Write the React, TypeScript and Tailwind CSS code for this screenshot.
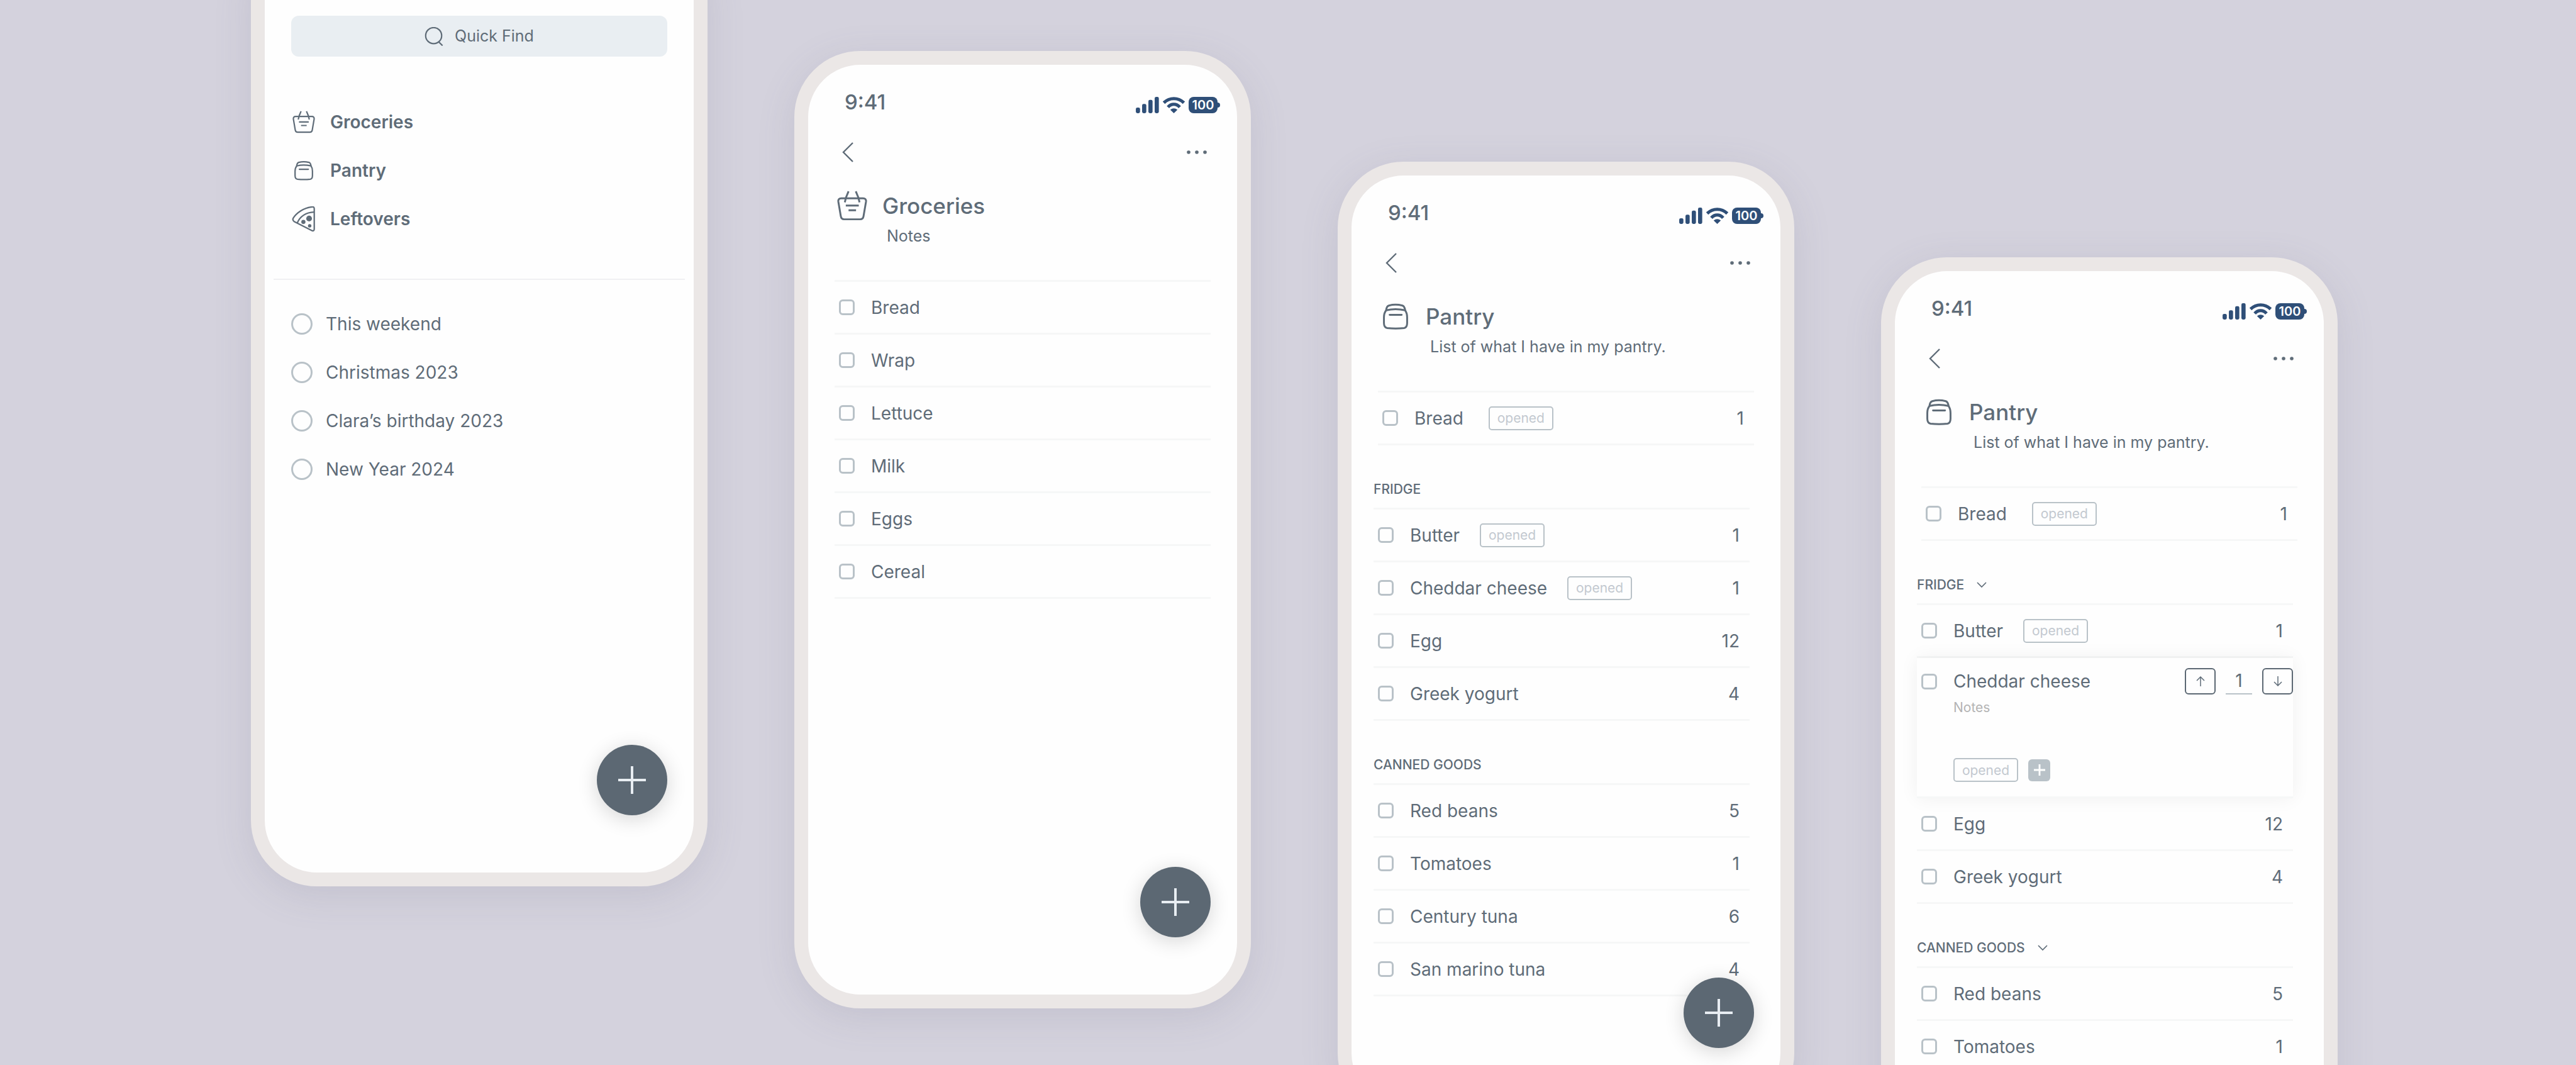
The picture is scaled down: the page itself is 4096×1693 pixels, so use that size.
import type { ReactNode } from "react";

type IconProps = { className?: string };

function BasketIcon({ className }: IconProps) {
  return (
    <svg viewBox="43 42 121 121" className={className} fill="none" stroke="currentColor" strokeWidth="7.5" strokeLinejoin="round" aria-hidden="true">
      <path d="M60 73H147Q160 73 159 86L149 145Q147 157 136 157H71Q60 157 58 145L48 86Q47 73 60 73Z" />
      <path d="M89 45L79 69L74 89M118 45L128 69L133 89" />
      <path d="M78 102H130M89 121H119" />
    </svg>
  );
}

function JarIcon({ className }: IconProps) {
  return (
    <svg viewBox="43 298 121 121" className={className} fill="none" stroke="currentColor" strokeWidth="7.5" strokeLinejoin="round" strokeLinecap="round" aria-hidden="true">
      <path d="M66 334Q67 318 77 315Q103 308 131 315Q140 318 142 334" />
      <path d="M66 334Q103 325 142 334Q150 345 150 362V385Q150 403 138 405Q104 409 70 405Q57 403 57 385V362Q57 345 66 334Z" />
      <path d="M80 352H128" />
    </svg>
  );
}

function PizzaIcon({ className }: IconProps) {
  return (
    <svg viewBox="37 548 132 132" className={className} fill="none" stroke="currentColor" strokeWidth="7.5" strokeLinejoin="round" aria-hidden="true">
      <path d="M148 551Q158 550 158 561V668Q157 679 147 676L53 628Q43 621 47 611C64 583 103 555 148 551Z" />
      <path d="M69 635C82 602 114 579 157 578" />
      <g fill="currentColor" stroke="none">
        <circle cx="131" cy="612" r="15" />
        <circle cx="101" cy="630" r="11" />
        <circle cx="134" cy="650" r="9" />
      </g>
    </svg>
  );
}

function SearchIcon({ className }: IconProps) {
  return (
    <svg viewBox="0 0 33 33" className={className} fill="none" stroke="currentColor" strokeWidth="2.4" aria-hidden="true">
      <circle cx="16" cy="15" r="14" />
      <path d="M24.5 25.5L31.5 32.5" />
    </svg>
  );
}

function ChevronLeft({ className }: IconProps) {
  return (
    <svg viewBox="0 0 18 32" className={className} fill="none" stroke="currentColor" strokeWidth="2.4" aria-hidden="true">
      <path d="M17 1L2 16L17 31" />
    </svg>
  );
}

function ChevronDown({ className }: IconProps) {
  return (
    <svg viewBox="0 0 16 10" className={className} fill="none" stroke="currentColor" strokeWidth="1.7" aria-hidden="true">
      <path d="M1 1L8 8L15 1" />
    </svg>
  );
}

function DotsIcon({ className }: IconProps) {
  return (
    <svg viewBox="0 0 32 6" className={className} fill="currentColor" aria-hidden="true">
      <circle cx="3" cy="3" r="2.8" />
      <circle cx="16" cy="3" r="2.8" />
      <circle cx="29" cy="3" r="2.8" />
    </svg>
  );
}

function PlusIcon({ className, weight }: IconProps & { weight: number }) {
  return (
    <svg viewBox="0 0 44 44" className={className} fill="none" stroke="currentColor" strokeWidth={weight} aria-hidden="true">
      <path d="M22 0V44M0 22H44" />
    </svg>
  );
}

function ArrowIcon({ down = false }: { down?: boolean }) {
  return (
    <svg viewBox="0 0 14 16" className="h-4 w-3.5" fill="none" stroke="currentColor" strokeWidth="1.5" aria-hidden="true">
      <path d={down ? "M7 0V14.5M1 9L7 15L13 9" : "M7 16V1.5M1 7L7 1L13 7"} />
    </svg>
  );
}

function SignalIcon({ className }: IconProps) {
  return (
    <svg viewBox="0 0 122 86" className={className} fill="currentColor" aria-hidden="true">
      <rect x="0" y="56" width="22" height="30" rx="8" />
      <rect x="33" y="37" width="22" height="49" rx="8" />
      <rect x="66" y="16" width="22" height="70" rx="8" />
      <rect x="99" y="0" width="22" height="86" rx="8" />
    </svg>
  );
}

function WifiIcon({ className }: IconProps) {
  return (
    <svg viewBox="0 0 116 86" className={className} fill="none" stroke="currentColor" strokeWidth="17" aria-hidden="true">
      <path d="M5 31Q28 9 58 9T111 31" />
      <path d="M27 54Q40 39 58 39T89 54" />
      <path d="M39 68Q58 53 77 68L58 86Z" fill="currentColor" stroke="none" />
    </svg>
  );
}

function Phone({ offset, children }: { offset: string; children: ReactNode }) {
  return (
    <section
      className={`relative min-h-[1522px] rounded-[105px] border-[22px] border-[#ebe7e6] bg-[#fefefe] shadow-[0_14px_60px_rgba(100,98,130,0.15)] ${offset}`}
    >
      {children}
    </section>
  );
}

function AddButton() {
  return (
    <button
      aria-label="Add"
      className="absolute right-[42px] bottom-[91px] flex size-28 items-center justify-center rounded-full bg-[#5c6873] text-[#e8edf2] shadow-[0_6px_32px_rgba(0,0,0,0.16)]"
    >
      <PlusIcon className="size-11" weight={4} />
    </button>
  );
}

function PhoneHeader({ title, note, icon }: { title: string; note: string; icon: ReactNode }) {
  return (
    <header>
      <div className="flex h-[79px] items-end justify-between pr-[27px] pl-[58px]">
        <span className="text-[33px] leading-10 font-medium">9:41</span>
        <div className="flex items-center gap-1.5 pb-0.5 text-[#2f4f78]">
          <SignalIcon className="h-[26px] w-[37px]" />
          <WifiIcon className="h-[26px] w-[35px]" />
          <div className="flex items-center">
            <span className="flex h-[26px] w-[46px] items-center justify-center rounded-lg bg-[#2f4f78] text-[20px] leading-none font-semibold text-white">
              100
            </span>
            <span className="h-2 w-1 rounded-r-full bg-[#2f4f78]" />
          </div>
        </div>
      </div>
      <div className="mt-10 flex h-10 items-center justify-between pr-12 pl-[54px]">
        <button aria-label="Back">
          <ChevronLeft className="h-8 w-[18px]" />
        </button>
        <button aria-label="More">
          <DotsIcon className="h-1.5 w-8" />
        </button>
      </div>
      <div className="mt-[41px] flex h-12 items-center gap-6 pl-[46px]">
        {icon}
        <h1 className="text-[35px] leading-none font-medium">{title}</h1>
      </div>
      <p className="mt-2 pl-[125px] text-[25px] leading-8">{note}</p>
    </header>
  );
}

function CheckBox() {
  return <input type="checkbox" className="size-[25px] shrink-0 appearance-none rounded-[6px] border-3 border-[#b9c2c8]" />;
}

function Tag() {
  return (
    <span className="flex h-[38px] w-[103px] items-center justify-center rounded-[5px] border-2 border-[#b9c2c8] text-[21px] leading-none text-[#c3c9d0]">
      opened
    </span>
  );
}

type Item = { name: string; count?: number; opened?: boolean };

function ItemRow({ item, wide = false }: { item: Item; wide?: boolean }) {
  return (
    <li className="flex h-[84px] items-center border-b-3 border-[#f6f7f7] pr-4 pl-[7px] text-[28px] leading-9">
      <label className="flex items-center gap-[26px]">
        <CheckBox />
        {item.name}
      </label>
      {item.opened && (
        <span className={wide ? "ml-10" : "ml-8"}>
          <Tag />
        </span>
      )}
      {item.count !== undefined && <span className="ml-auto">{item.count}</span>}
    </li>
  );
}

function SectionTitle({ title, collapsible = false }: { title: string; collapsible?: boolean }) {
  return (
    <h2 className="pt-14 pb-[15px] text-[21px] leading-7 font-medium">
      {collapsible ? (
        <button className="flex items-center gap-5">
          {title}
          <ChevronDown className="h-2.5 w-4" />
        </button>
      ) : (
        title
      )}
    </h2>
  );
}

function TopItem() {
  return (
    <ul className="mx-[42px] mt-[54px] border-t-3 border-[#f6f7f7]">
      <ItemRow item={{ name: "Bread", count: 1, opened: true }} wide />
    </ul>
  );
}

function ExpandedItem() {
  return (
    <li className="relative h-[223px] border-b-3 border-[#f6f7f7] bg-[#fefefe] pt-4 shadow-[0_0_28px_rgba(0,0,0,0.06)]">
      <div className="flex h-[42px] items-center justify-between pl-[7px]">
        <label className="flex items-center gap-[26px] text-[28px] leading-9">
          <CheckBox />
          Cheddar cheese
        </label>
        <div className="flex items-center gap-4">
          <button aria-label="Increase" className="flex h-[42px] w-[49px] items-center justify-center rounded-[6px] border-2 border-[#5c6873]">
            <ArrowIcon />
          </button>
          <input aria-label="Quantity" defaultValue="1" className="h-[42px] w-[42px] border-b-2 border-[#b9c2c8] text-center text-[28px]" />
          <button aria-label="Decrease" className="flex h-[42px] w-[49px] items-center justify-center rounded-[6px] border-2 border-[#5c6873]">
            <ArrowIcon down />
          </button>
        </div>
      </div>
      <div className="pl-[58px]">
        <input
          aria-label="Notes"
          placeholder="Notes"
          className="mt-[7px] block h-7 w-full bg-transparent text-[21px] leading-7 placeholder:text-[#b4b4b4] placeholder:opacity-100"
        />
        <div className="mt-[66px] flex items-center gap-4">
          <Tag />
          <button aria-label="Add tag" className="flex size-[35px] items-center justify-center rounded-[6px] bg-[#b9c2c8] text-white">
            <PlusIcon className="size-[18px]" weight={7} />
          </button>
        </div>
      </div>
    </li>
  );
}

const places = [
  { name: "Groceries", icon: <BasketIcon className="size-9" /> },
  { name: "Pantry", icon: <JarIcon className="size-9" /> },
  { name: "Leftovers", icon: <PizzaIcon className="size-10" /> },
];

const lists = ["This weekend", "Christmas 2023", "Clara’s birthday 2023", "New Year 2024"];

const groceries = ["Bread", "Wrap", "Lettuce", "Milk", "Eggs", "Cereal"];

const fridge: Item[] = [
  { name: "Butter", count: 1, opened: true },
  { name: "Cheddar cheese", count: 1, opened: true },
  { name: "Egg", count: 12 },
  { name: "Greek yogurt", count: 4 },
];

const canned: Item[] = [
  { name: "Red beans", count: 5 },
  { name: "Tomatoes", count: 1 },
  { name: "Century tuna", count: 6 },
  { name: "San marino tuna", count: 4 },
];

function HomePhone() {
  return (
    <Phone offset="-mt-[113px]">
      <div className="px-[42px] pt-[116px]">
        <button className="flex h-[65px] w-full items-center justify-center gap-[18px] rounded-xl bg-[#e9eef2] text-[25px]">
          <SearchIcon className="size-[30px]" />
          Quick Find
        </button>
      </div>
      <nav className="mt-[65px] px-10">
        {places.map((p) => (
          <a key={p.name} href="#" className="flex h-[77px] items-center gap-5 text-[28px] font-semibold">
            <span className="flex w-11 justify-center">{p.icon}</span>
            {p.name}
          </a>
        ))}
      </nav>
      <hr className="mx-3.5 mt-[57px] border-t-2 border-[#f0f0f2]" />
      <div className="mt-[31px] px-[42px]">
        {lists.map((name) => (
          <label key={name} className="flex h-[77px] items-center gap-[21px] text-[28px]">
            <input type="radio" name="list" className="size-[34px] appearance-none rounded-full border-3 border-[#b9c2c8]" />
            {name}
          </label>
        ))}
      </div>
      <AddButton />
    </Phone>
  );
}

function GroceriesPhone() {
  return (
    <Phone offset="mt-[81px]">
      <PhoneHeader title="Groceries" note="Notes" icon={<BasketIcon className="size-12" />} />
      <ul className="mx-[42px] mt-[54px] border-t-3 border-[#f6f7f7]">
        {groceries.map((name) => (
          <ItemRow key={name} item={{ name }} />
        ))}
      </ul>
      <AddButton />
    </Phone>
  );
}

function PantryPhone() {
  return (
    <Phone offset="mt-[257px]">
      <PhoneHeader title="Pantry" note="List of what I have in my pantry." icon={<JarIcon className="size-12" />} />
      <TopItem />
      <div className="mr-[49px] ml-[35px]">
        <SectionTitle title="FRIDGE" />
        <ul className="border-t-3 border-[#f6f7f7]">
          {fridge.map((item) => (
            <ItemRow key={item.name} item={item} />
          ))}
        </ul>
        <SectionTitle title="CANNED GOODS" />
        <ul className="border-t-3 border-[#f6f7f7]">
          {canned.map((item) => (
            <ItemRow key={item.name} item={item} />
          ))}
        </ul>
      </div>
      <AddButton />
    </Phone>
  );
}

function PantryEditPhone() {
  return (
    <Phone offset="mt-[409px]">
      <PhoneHeader title="Pantry" note="List of what I have in my pantry." icon={<JarIcon className="size-12" />} />
      <TopItem />
      <div className="mr-[49px] ml-[35px]">
        <SectionTitle title="FRIDGE" collapsible />
        <ul className="border-t-3 border-[#f6f7f7]">
          <ItemRow item={fridge[0]} />
          <ExpandedItem />
          <ItemRow item={fridge[2]} />
          <ItemRow item={fridge[3]} />
        </ul>
        <SectionTitle title="CANNED GOODS" collapsible />
        <ul className="border-t-3 border-[#f6f7f7]">
          <ItemRow item={canned[0]} />
          <ItemRow item={canned[1]} />
        </ul>
      </div>
    </Phone>
  );
}

export default function App() {
  return (
    <main className="grid h-screen grid-cols-4 items-start gap-[138px] overflow-hidden bg-[#d4d2dd] pr-[379px] pl-[399px] font-[Inter,sans-serif] text-[#5f6c78]">
      <HomePhone />
      <GroceriesPhone />
      <PantryPhone />
      <PantryEditPhone />
    </main>
  );
}
